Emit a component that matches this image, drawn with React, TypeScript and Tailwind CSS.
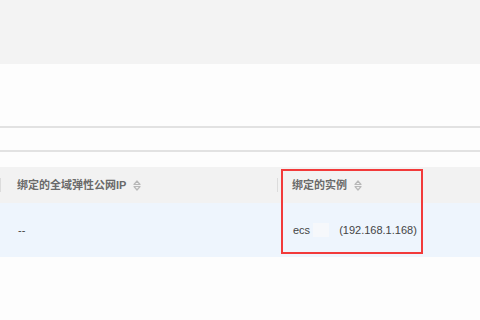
import React from "react";

const SortIcon = () => (
  <svg width="8" height="11" viewBox="0 0 8 11" className="ml-[7px]">
    <path d="M1 4.5 L4 1 L7 4.5 Z" fill="none" stroke="#b8b8b8" strokeWidth="1.2" strokeLinejoin="round" />
    <path d="M1 6.5 L4 10 L7 6.5 Z" fill="none" stroke="#b8b8b8" strokeWidth="1.2" strokeLinejoin="round" />
  </svg>
);

export default function App() {
  const font = { fontFamily: '"Liberation Sans", "Noto Sans CJK SC", sans-serif' };
  return (
    <div className="relative w-[480px] h-[320px] bg-[#fdfdfd] overflow-hidden" style={font}>
      <div className="h-[64px] bg-[#f3f3f3]" />
      <div className="h-[62px]" />
      <div className="h-[2px] bg-[#e2e2e2]" />
      <div className="h-[22px]" />
      <div className="h-[2px] bg-[#e2e2e2]" />
      <div className="h-[15px]" />
      <div className="h-[36px] bg-[#f2f2f2] flex items-center text-[11px] text-[#6a6a6a] font-bold">
        <div className="w-[277px] h-full flex items-center">
          <div className="w-[1px] h-[14px] bg-[#dcdcdc]" />
          <span className="ml-[16px]">绑定的全域弹性公网IP</span>
          <SortIcon />
        </div>
        <div className="flex-1 h-full flex items-center">
          <div className="w-[1px] h-[14px] bg-[#dcdcdc]" />
          <span className="ml-[14px]">绑定的实例</span>
          <SortIcon />
        </div>
      </div>
      <div className="h-[54px] bg-[#eef5fd] flex items-center text-[11px] text-[#444]">
        <div className="w-[277px] pl-[18px]">--</div>
        <div className="flex-1 flex items-center pl-[16px]">
          <span>ecs</span>
          <span className="inline-block w-[16px] h-[14px] ml-[3px] bg-[#f6f8fb]" />
          <span className="ml-[10px]">(192.168.1.168)</span>
        </div>
      </div>
      <div className="absolute left-[281px] top-[169px] w-[142px] h-[85px] border-2 border-[#f23a3a]" />
    </div>
  );
}
